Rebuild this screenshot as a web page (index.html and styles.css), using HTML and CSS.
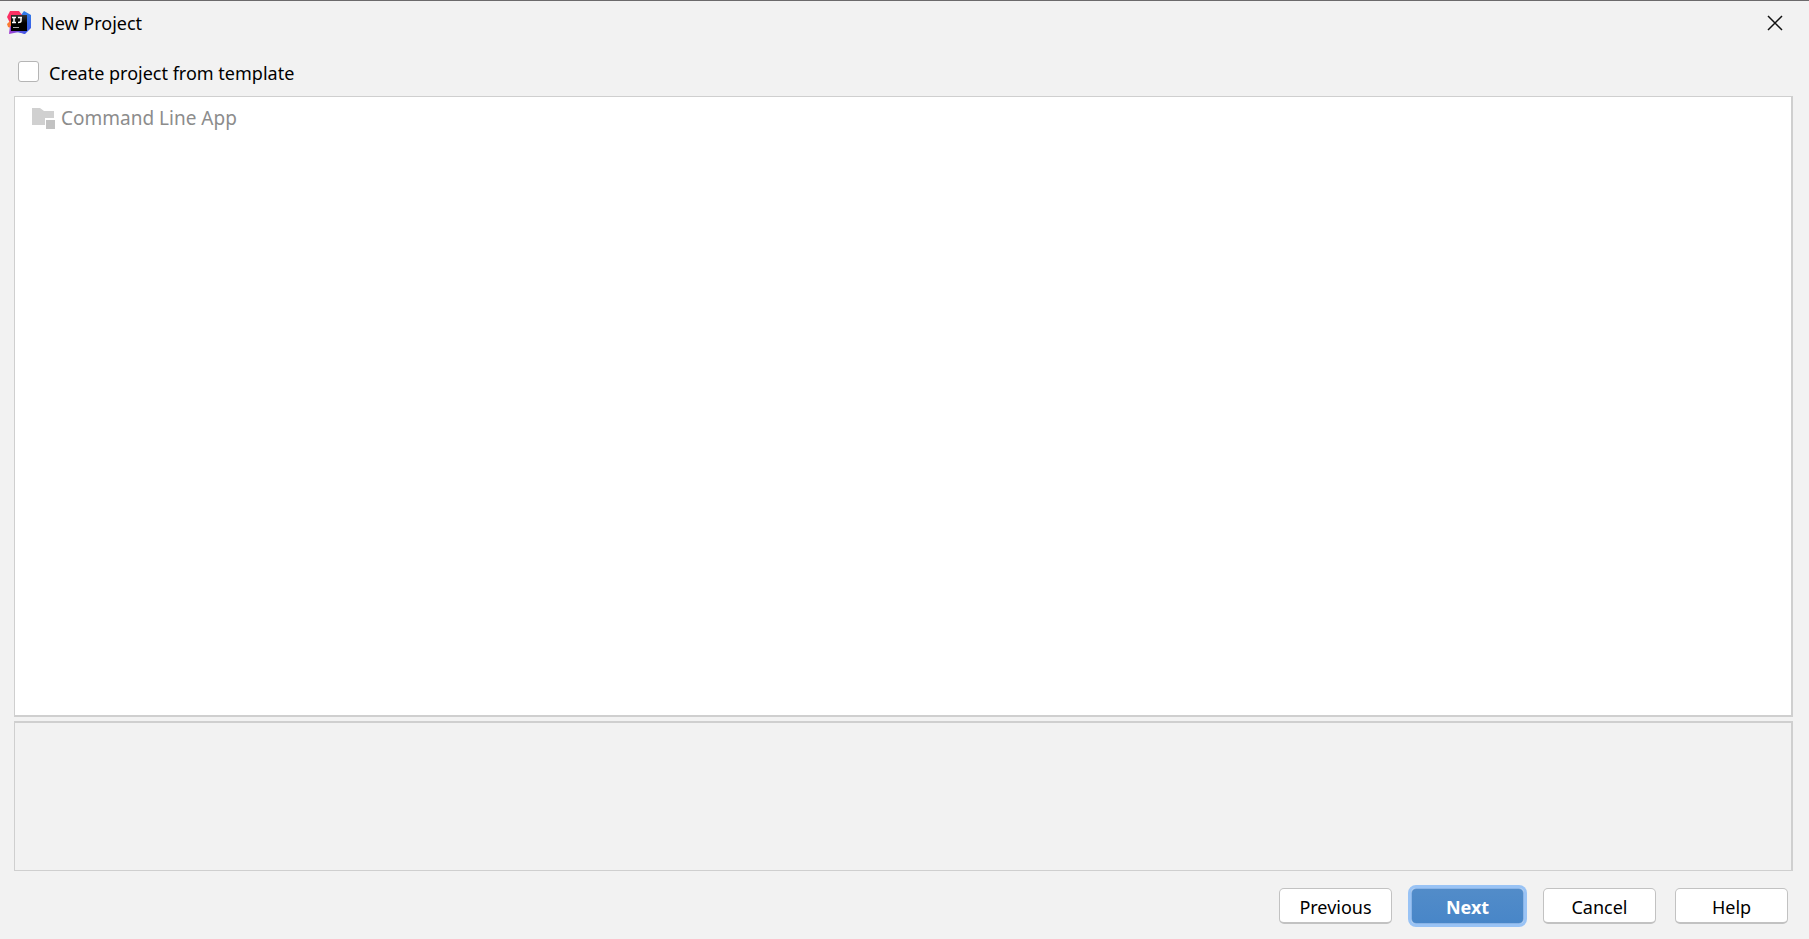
FILE: index.html
```html
<!DOCTYPE html>
<html lang="en">
<head>
<meta charset="utf-8">
<title>New Project</title>
<link rel="stylesheet" href="styles.css">
</head>
<body>
<main class="dialog">
  <header class="titlebar">
    <svg class="logo" viewBox="0 0 24 24" aria-hidden="true">
      <defs>
        <linearGradient id="blue" x1="0" y1="0" x2="0" y2="1"><stop offset="0" stop-color="#2f7fe8"/><stop offset="1" stop-color="#4054e6"/></linearGradient>
        <linearGradient id="purple" x1="0" y1="0" x2="1" y2="0"><stop offset="0" stop-color="#a43fd0"/><stop offset="1" stop-color="#3f5be8"/></linearGradient>
        <linearGradient id="black" x1="0" y1="0" x2="0" y2="1"><stop offset="0" stop-color="#333"/><stop offset="0.5" stop-color="#000"/></linearGradient>
      </defs>
      <path fill="url(#blue)" d="M14 4 17 0l7 4v13l-6 6-8-2z"/>
      <path fill="#fb2f63" d="M3 0h9l3 4v8H3L0 6z"/>
      <path fill="#fb7a32" d="M0 13l4-4v8l-3-1z"/>
      <path fill="url(#purple)" d="M3 15h16l-1 8-6-2-10 2z"/>
      <path fill="url(#black)" d="M4 4h16v16H4z"/>
      <path fill="none" stroke="#fff" stroke-width="1.5" d="M5 6.500h4M7 6v6M5 11.500h4M11 6.500h4M14 6v4q0 1.500-3 1.500"/>
      <path fill="#aaa" d="M6 16h6v1H6z"/>
    </svg>
    <h1 class="title">New Project</h1>
    <button class="close" type="button" aria-label="Close">
      <svg class="close-icon" viewBox="0 0 16 16" aria-hidden="true"><path d="M1 1l14 14M15 1L1 15"/></svg>
    </button>
  </header>
  <label class="option"><input class="check" type="checkbox"><span>Create project from template</span></label>
  <section class="panel templates">
    <ul class="list">
      <li class="item">
        <svg class="folder" viewBox="0 0 23 21" aria-hidden="true">
          <path fill="#d0d0d0" d="M0 0h8l4 3h10v7h-9v7H0z"/>
          <path fill="#c2c2c2" d="M14 12h9v9h-9z"/>
        </svg>
        <span>Command Line App</span>
      </li>
    </ul>
  </section>
  <section class="panel description"></section>
  <footer class="actions">
    <button class="button" type="button">Previous</button>
    <button class="button primary" type="button">Next</button>
    <button class="button" type="button">Cancel</button>
    <button class="button" type="button">Help</button>
  </footer>
</main>
</body>
</html>
```
FILE: styles.css
```css
* { box-sizing: border-box; }
body {
  margin: 0;
  background: #f2f2f2;
  color: #000;
  font-family: "Noto Sans", "Open Sans", sans-serif;
  font-size: 18px;
  line-height: 24px;
}
.dialog {
  display: flex;
  flex-direction: column;
  height: 100vh;
  border-top: 1px solid #6c6a6c;
}
.titlebar {
  display: flex;
  align-items: center;
  height: 44px;
  padding: 0 24px 0 7px;
}
.logo { width: 24px; height: 24px; }
.title {
  flex: 1;
  margin: 0 0 0 10px;
  font-size: 18px;
  font-weight: 400;
}
.close {
  display: flex;
  padding: 2px;
  border: 0;
  background: none;
}
.close-icon {
  width: 16px;
  height: 16px;
  fill: none;
  stroke: #111;
  stroke-width: 1.5;
}
.option {
  display: flex;
  gap: 10px;
  align-self: flex-start;
  margin: 16px 0 11px 18px;
}
.check {
  appearance: none;
  width: 21px;
  height: 21px;
  margin: 0;
  border: 1px solid #b5b5b5;
  border-radius: 3px;
  background: #fff;
}
.panel {
  margin: 0 16px 0 14px;
  border: 1px solid #cfcfcf;
  border-right-width: 2px;
}
.templates {
  flex: 1;
  border-bottom-width: 2px;
  background: #fff;
}
.list {
  margin: 0;
  padding: 9px 17px;
  list-style: none;
}
.item {
  display: flex;
  align-items: center;
  gap: 6px;
  color: #8c8c8c;
  font-size: 19px;
}
.folder { width: 23px; height: 21px; }
.description {
  height: 150px;
  margin-top: 4px;
  border-top-width: 2px;
}
.actions {
  display: flex;
  justify-content: flex-end;
  gap: 19px;
  padding: 17px 21px 15px;
}
.button {
  width: 113px;
  height: 36px;
  padding: 2px 0 0;
  border: 1px solid #c2c2c2;
  border-bottom-width: 2px;
  border-radius: 5px;
  background: #fff;
  color: #000;
  font: inherit;
}
.primary {
  border: 1px solid #8ab4e6;
  background: linear-gradient(#528cc9, #4886c8);
  box-shadow: 0 0 0 3px #99c3f5;
  color: #fff;
  font-weight: 700;
}
```
